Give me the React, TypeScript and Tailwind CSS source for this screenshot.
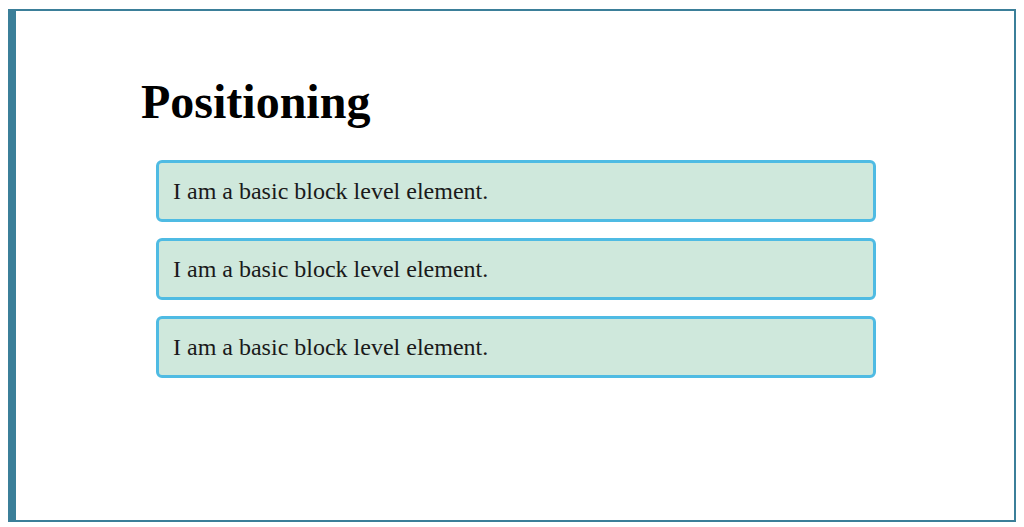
const items = [1, 2, 3];

function App() {
  return (
    <div className="px-2 pt-[9px] bg-white font-['Liberation_Serif',serif]">
      <div className="h-[513px] border-2 border-l-8 border-[#3b7f99] pl-[125px] pt-[64px]">
        <h1 className="text-[48px] leading-[53px] font-bold text-black">Positioning</h1>
        <div className="mt-[32px] ml-[15px] w-[720px] flex flex-col gap-4">
          {items.map((i) => (
            <div
              key={i}
              className="border-[3px] border-[#4fbbe3] rounded-md bg-[#cfe8dc] px-[14px] py-[14px] text-[24px] leading-[28px] text-[#1a1a1a]"
            >
              I am a basic block level element.
            </div>
          ))}
        </div>
      </div>
    </div>
  );
}

export default App;
